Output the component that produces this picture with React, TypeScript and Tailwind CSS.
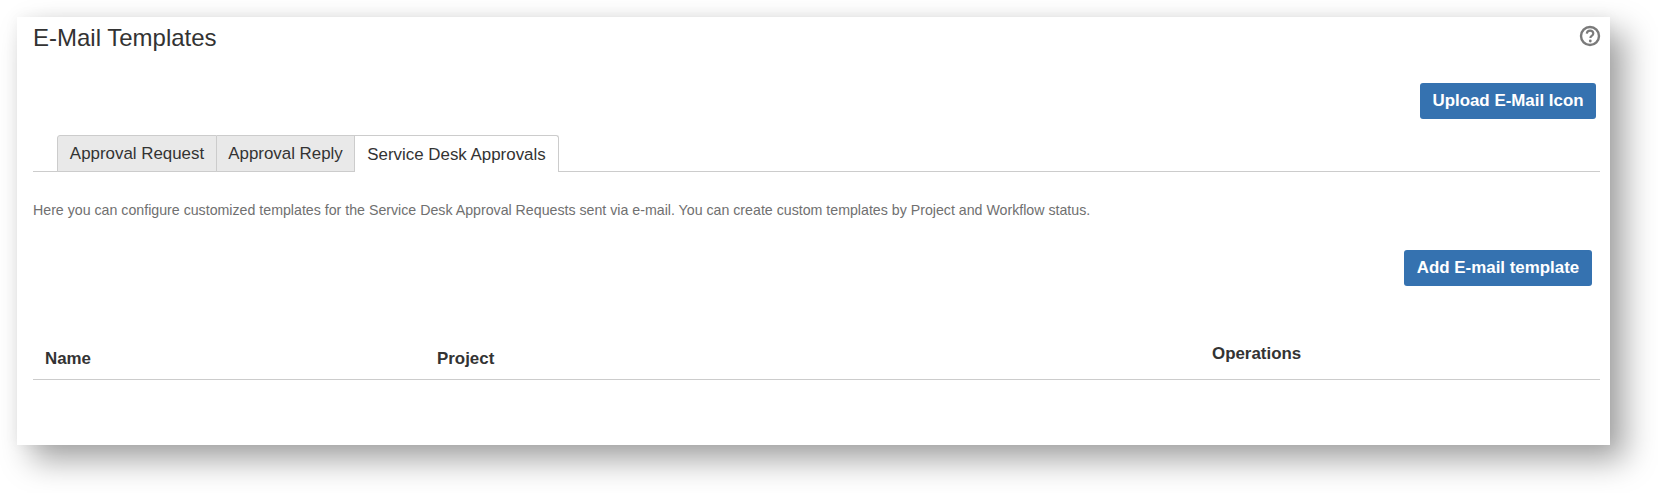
const App = () => {
  return (
    <div className="w-[1658px] h-[493px] bg-white pt-[17px] pl-[17px] font-['Liberation_Sans',Arial,sans-serif] text-[#333333] overflow-hidden">
      <div className="w-[1593px] h-[428px] bg-white pl-4 pr-[10px] shadow-[15px_15px_30px_rgba(0,0,0,0.36),0_0_14px_rgba(0,0,0,0.05)]">
        {/* Title row */}
        <div className="flex justify-between items-start h-[66px]">
          <h1 className="text-2xl leading-[42px]">E-Mail Templates</h1>
          <svg className="w-[22px] h-[22px] mt-[8px] mr-[-1px]" viewBox="0 0 22 22" fill="none">
            <circle cx="11" cy="11" r="9" stroke="#7a7a7a" strokeWidth="2.4" />
            <path d="M7.8 8.6c.2-1.9 1.5-2.9 3.3-2.9 1.9 0 3.2 1.1 3.2 2.7 0 1.2-.7 1.9-1.6 2.5-.9.6-1.3 1-1.3 2" stroke="#7a7a7a" strokeWidth="2.2" />
            <circle cx="11.3" cy="16" r="1.4" fill="#7a7a7a" />
          </svg>
        </div>

        <div className="flex justify-end pr-1">
          <button className="h-9 w-[176px] rounded-[3px] bg-[#3572b0] text-white font-bold text-[16.9px]">Upload E-Mail Icon</button>
        </div>

        {/* Tabs */}
        <div className="mt-[15px] h-[38px] flex items-end pl-6 border-b border-[#cccccc]">
          <div className="h-[37px] w-[160px] mb-[-1px] flex items-center justify-center bg-[#e9e9e9] border border-[#cccccc] rounded-tl-[3px] text-[16.9px] pt-px">Approval Request</div>
          <div className="h-[37px] w-[138px] mb-[-1px] flex items-center justify-center bg-[#e9e9e9] border border-l-0 border-[#cccccc] text-[16.9px] pt-px">Approval Reply</div>
          <div className="h-[37px] w-[204px] mb-[-1px] flex items-center justify-center bg-white border border-l-0 border-b-0 border-[#cccccc] rounded-tr-[3px] text-[16.9px] pt-px">Service Desk Approvals</div>
        </div>

        <p className="mt-[28px] text-[14.2px] leading-[20px] text-[#707070]">
          Here you can configure customized templates for the Service Desk Approval Requests sent via e-mail. You can create custom templates by Project and Workflow status.
        </p>

        <div className="mt-[30px] flex justify-end pr-2">
          <button className="h-9 w-[188px] rounded-[3px] bg-[#3572b0] text-white font-bold text-[16.9px]">Add E-mail template</button>
        </div>

        {/* Table header */}
        <div className="mt-[46px] h-[48px] flex border-b border-[#cccccc] font-bold text-[16.9px]">
          <div className="w-[404px] pl-3 pt-[14px]">Name</div>
          <div className="w-[775px] pt-[14px]">Project</div>
          <div className="pt-[9px]">Operations</div>
        </div>
      </div>
    </div>
  )
}

export default App
